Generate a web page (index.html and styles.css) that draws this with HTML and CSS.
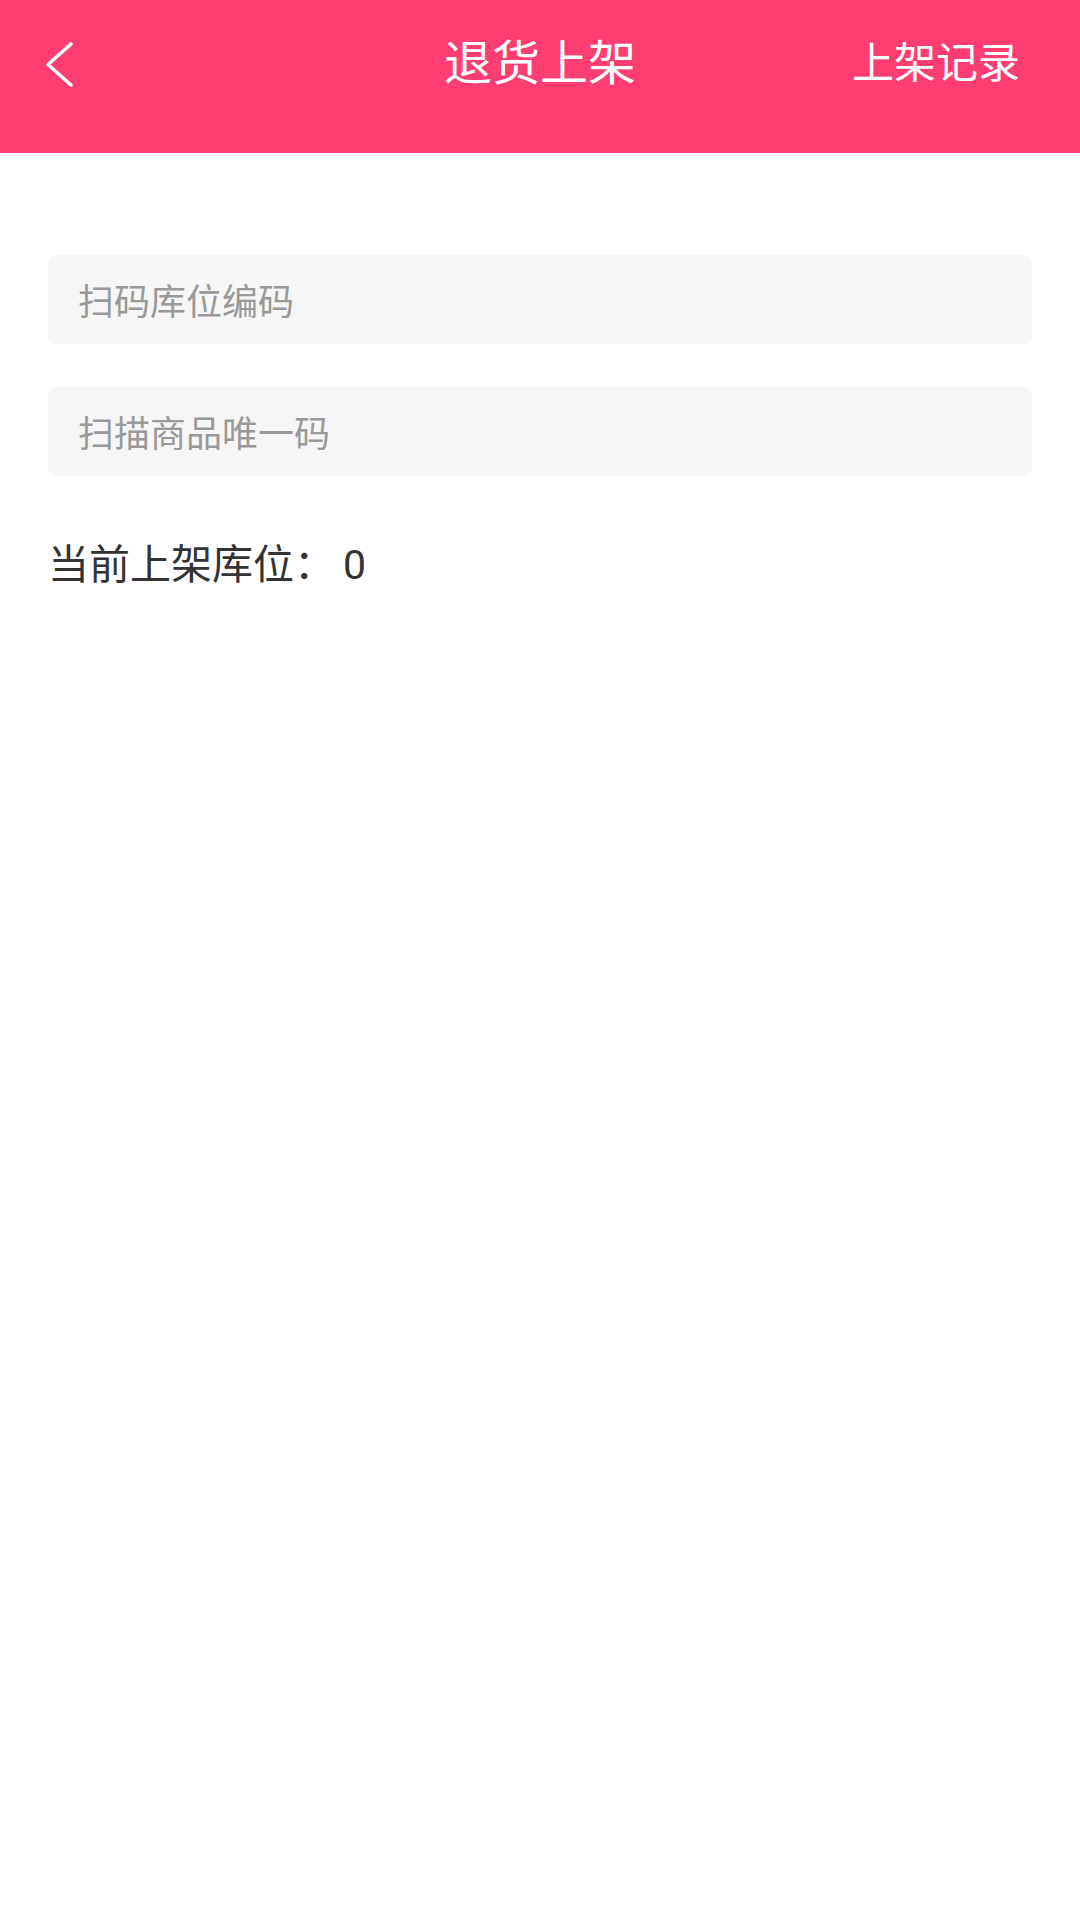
FILE: index.html
```html
<!DOCTYPE html>
<html lang="zh-CN">
<head>
<meta charset="utf-8">
<title>退货上架</title>
<link rel="stylesheet" href="styles.css">
</head>
<body>
<header class="header">
  <div class="nav">
    <div class="nav-back">
      <svg class="back-icon" width="40" height="60" viewBox="0 0 40 60">
        <path d="M31 10 L8 30.5 L31 51" fill="none" stroke="#ffffff" stroke-width="3.6" stroke-linecap="round" stroke-linejoin="round"/>
      </svg>
    </div>
    <div class="nav-title">退货上架</div>
    <div class="nav-action">上架记录</div>
  </div>
</header>
<main class="content">
  <div class="field"><input class="field-input" type="text" placeholder="扫码库位编码"></div>
  <div class="field"><input class="field-input" type="text" placeholder="扫描商品唯一码"></div>
  <div class="current">当前上架库位：<span class="current-value">0</span></div>
</main>
</body>
</html>
```
FILE: styles.css
```css
* { box-sizing: border-box; }
html, body {
  margin: 0;
  padding: 0;
  background: #ffffff;
  font-family: Roboto, "Noto Sans CJK SC", sans-serif;
}
.header {
  height: 153px;
  background: #fe3d70;
  color: #ffffff;
}
.nav {
  position: relative;
  height: 128px;
  display: flex;
  align-items: center;
  justify-content: space-between;
  padding: 0 60px 0 40px;
}
.nav-back {
  width: 40px;
  height: 60px;
  display: flex;
}
.nav-title {
  position: absolute;
  left: 0;
  right: 0;
  text-align: center;
  font-size: 48px;
  line-height: 62px;
  pointer-events: none;
}
.nav-action {
  font-size: 42px;
  line-height: 62px;
}
.content {
  padding: 102px 48px 0;
  display: flex;
  flex-direction: column;
}
.field {
  height: 89px;
  margin-bottom: 43px;
}
.field-input {
  width: 100%;
  height: 100%;
  border: none;
  outline: none;
  border-radius: 9px;
  background: #f6f6f6;
  padding: 7px 30px 0;
  font-family: Roboto, "Noto Sans CJK SC", sans-serif;
  font-size: 36px;
  color: #333333;
}
.field-input::placeholder {
  color: #999999;
}
.current {
  margin-top: 15px;
  font-size: 41px;
  line-height: 62px;
  color: #333333;
}
.current-value {
  margin-left: 8px;
}
```
